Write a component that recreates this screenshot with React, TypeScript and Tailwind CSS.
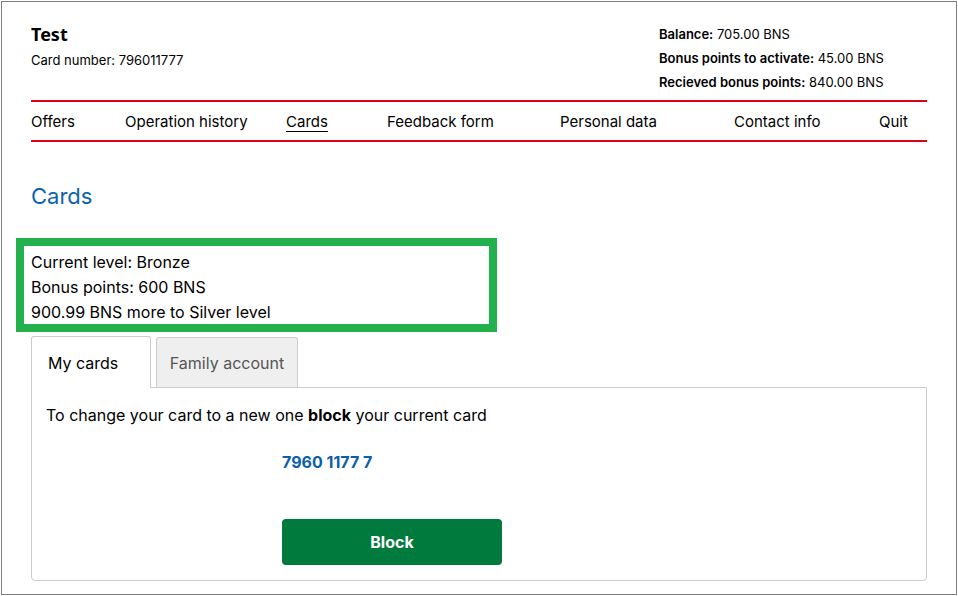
const navItems = [
  { label: "Offers", w: "w-[94px]" },
  { label: "Operation history", w: "w-[161px]" },
  { label: "Cards", w: "w-[101px]", active: true },
  { label: "Feedback form", w: "w-[173px]" },
  { label: "Personal data", w: "w-[174px]" },
  { label: "Contact info", w: "w-[145px]" },
  { label: "Quit", w: "flex-1" },
];

export default function App() {
  return (
    <div className="p-[1px] bg-white">
      <div
        className="w-[956px] h-[594px] border border-[#7f7f7f] bg-white text-black overflow-hidden"
        style={{ fontFamily: "Inter, 'Liberation Sans', sans-serif" }}
      >
        <div className="ml-[29px] w-[896px] pt-[20px]">
          {/* header */}
          <div className="flex justify-between items-start">
            <div>
              <div className="text-[18px] leading-[24px] font-bold" style={{ fontFamily: "'Noto Sans', sans-serif" }}>
                Test
              </div>
              <div className="text-[13px] leading-[24px] mt-[2px]">Card number: 796011777</div>
            </div>
            <div className="w-[268px] text-[13px] leading-[24px]">
              <div>
                <b className="font-semibold">Balance:</b> 705.00 BNS
              </div>
              <div>
                <b className="font-semibold">Bonus points to activate:</b> 45.00 BNS
              </div>
              <div>
                <b className="font-semibold">Recieved bonus points:</b> 840.00 BNS
              </div>
            </div>
          </div>

          {/* nav */}
          <nav className="mt-[6px] border-y-2 border-[#e2001a] h-[42px] pt-[3px] flex items-center text-[15px]">
            {navItems.map((item) => (
              <div key={item.label} className={`${item.w} whitespace-nowrap`}>
                <span className={item.active ? "underline underline-offset-[4px]" : ""}>{item.label}</span>
              </div>
            ))}
          </nav>

          <h1 className="mt-[39px] text-[22px] leading-[30px] text-[#0c64ac]">Cards</h1>

          {/* level summary */}
          <div className="mt-[27px] -ml-[15px] w-[481px] h-[94px] border-[8px] border-[#22b14c] pl-[7px] pt-[4px] text-[16px] leading-[25px]">
            <div>Current level: Bronze</div>
            <div>Bonus points: 600 BNS</div>
            <div>900.99 BNS more to Silver level</div>
          </div>

          {/* tabs */}
          <div className="mt-[4px] flex items-end gap-[5px] relative z-10">
            <div className="w-[120px] h-[52px] -mb-px bg-white border border-b-0 border-[#cccccc] rounded-t-[3px] pl-[16px] flex items-center text-[16px]">
              My cards
            </div>
            <div className="w-[142px] h-[50px] bg-[#efefef] border border-b-0 border-[#cccccc] rounded-t-[3px] flex items-center justify-center text-[16px] text-[#555555]">
              Family account
            </div>
          </div>

          <div className="h-[194px] border border-[#cccccc] rounded-b-[4px] pt-[15px] pl-[14px]">
            <div className="text-[16px] leading-[24px]">
              To change your card to a new one <b className="font-bold">block</b> your current card
            </div>
            <div className="ml-[236px] mt-[23px] text-[16px] leading-[24px] font-bold text-[#0c5ea9]">7960 1177 7</div>
            <button className="block ml-[236px] mt-[45px] w-[220px] h-[46px] rounded-[4px] bg-[#007a3d] text-white font-bold text-[16px]">
              Block
            </button>
          </div>
        </div>
      </div>
    </div>
  );
}
